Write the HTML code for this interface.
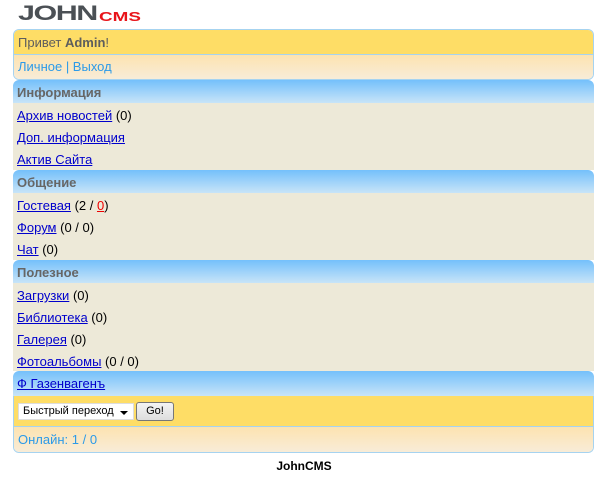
<!DOCTYPE html>
<html><head><meta charset="utf-8"><style>
*{margin:0;padding:0;box-sizing:border-box}
body{width:608px;height:477px;background:#fff;font-family:"Liberation Sans",Arial,sans-serif;font-size:13px;color:#000;position:relative;overflow:hidden}
.logo{position:absolute;left:18px;top:4px;height:20px;white-space:nowrap}
.logo .j{font-family:"Liberation Sans",sans-serif;font-weight:bold;font-size:21px;color:#4b5055;letter-spacing:-1px;transform:scaleX(1.45);transform-origin:left;display:inline-block;line-height:20px}
.logo .c{position:absolute;left:81px;top:5px;font-weight:bold;font-size:13px;color:#e8141a;transform:scaleX(1.45);transform-origin:left;display:inline-block}
.box{position:absolute;left:13px;width:581px}
.hdr{top:29px;height:51px;border:1px solid #a6d3f0;border-radius:6px;overflow:hidden}
.hdr .a{height:25px;background:#fedd66;color:#5d5d5d;padding:5px 4px;border-bottom:1px solid #a6d3f0}
.hdr .b{height:24px;background:linear-gradient(#fde3b0,#f8ecd8);padding:4px 4px;color:#2c9ae8}
.ph{height:23px;background:linear-gradient(#74c0fb,#c8e4f8);border-radius:6px 6px 0 0;color:#666;font-weight:bold;padding:5px 4px}
.ph a{color:#00c;font-weight:normal}
.m{height:22px;background:#ede9d8;padding:5px 4px 0;line-height:15px}
.m.t{height:23px}
a{color:#00c;text-decoration:underline}
.ft{top:396px;height:57px;border:1px solid #a6d3f0;border-radius:0 0 6px 6px;overflow:hidden;border-top:none}
.ft .a{height:31px;background:#fedd66;border-bottom:1px solid #a6d3f0;padding:6px 4px;display:flex;align-items:center}
.ft .b{height:25px;background:linear-gradient(#fde3b0,#f8ecd8);padding:5px 4px;color:#2c9ae8}
.sel{width:116px;height:17px;background:#fff;border:1px solid #ddd;font-size:11px;padding:1px 4px;position:relative;margin-right:2px}
.sel:after{content:"";position:absolute;right:5px;top:7px;border:4px solid transparent;border-top:4px solid #000}
.btn{height:19px;width:38px;border:1px solid #777;border-radius:3px;background:linear-gradient(#f4f4f4,#ddd);font-size:11px;text-align:center;line-height:17px}
.cp{position:absolute;top:459px;left:0;width:608px;text-align:center;font-weight:bold;font-size:12px}
</style></head><body>
<div class="logo"><span class="j">JOHN</span><span class="c">CMS</span></div>
<div class="box hdr"><div class="a">Привет <b>Admin</b>!</div><div class="b">Личное | Выход</div></div>
<div class="box" style="top:80px">
<div class="ph">Информация</div>
<div class="m"><a>Архив новостей</a> (0)</div>
<div class="m"><a>Доп. информация</a></div>
<div class="m t"><a>Актив Сайта</a></div>
<div class="ph">Общение</div>
<div class="m"><a>Гостевая</a> (2 / <a style="color:#e00">0</a>)</div>
<div class="m"><a>Форум</a> (0 / 0)</div>
<div class="m t"><a>Чат</a> (0)</div>
<div class="ph">Полезное</div>
<div class="m"><a>Загрузки</a> (0)</div>
<div class="m"><a>Библиотека</a> (0)</div>
<div class="m"><a>Галерея</a> (0)</div>
<div class="m"><a>Фотоальбомы</a> (0 / 0)</div>
<div class="ph" style="height:25px"><a>Ф Газенвагенъ</a></div>
</div>
<div class="box ft"><div class="a"><div class="sel">Быстрый переход</div><div class="btn">Go!</div></div><div class="b">Онлайн: 1 / 0</div></div>
<div class="cp">JohnCMS</div>
</body></html>
